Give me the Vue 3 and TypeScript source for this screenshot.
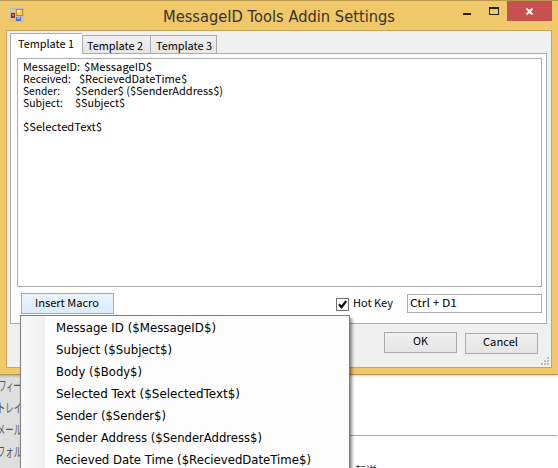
<script setup lang="ts">
import { h } from 'vue'

interface LabelProps { text: string; width: number; height?: number }

// Single-line label fitted to a fixed advance width
const Label = (props: LabelProps) => {
  const height = props.height ?? 12
  return h('svg', { class: 'label', width: props.width, height }, [
    h('text', {
      x: 0, y: height - 2, fill: 'currentColor',
      textLength: props.width, lengthAdjust: 'spacingAndGlyphs',
    }, props.text),
  ])
}
Label.props = ['text', 'width', 'height']

const lines = [
  { key: 'MessageID:', kw: 57, gap: 4, value: '$MessageID$', vw: 68 },
  { key: 'Received:', kw: 48, gap: 8, value: '$RecievedDateTime$', vw: 108 },
  { key: 'Sender:', kw: 37, gap: 15, value: '$Sender$ ($SenderAddress$)', vw: 148 },
  { key: 'Subject:', kw: 40, gap: 12, value: '$Subject$', vw: 50 },
  { key: '', kw: 0, gap: 0, value: '', vw: 0 },
  { key: '', kw: 0, gap: 0, value: '$SelectedText$', vw: 79 },
]
const macros = [
  { text: 'Message ID ($MessageID$)', width: 160 },
  { text: 'Subject ($Subject$)', width: 116 },
  { text: 'Body ($Body$)', width: 86 },
  { text: 'Selected Text ($SelectedText$)', width: 184 },
  { text: 'Sender ($Sender$)', width: 110 },
  { text: 'Sender Address ($SenderAddress$)', width: 206 },
  { text: 'Recieved Date Time ($RecievedDateTime$)', width: 255 },
]
const fields = [
  { text: 'フィー', width: 22 },
  { text: 'トレイ', width: 25 },
  { text: 'メール', width: 25 },
  { text: 'フォル', width: 25 },
]
</script>

<template>
  <div class="screen">
    <section class="window">
      <header class="titlebar">
        <svg class="appicon" width="14" height="14" shape-rendering="crispEdges">
          <rect width="14" height="14" fill="#b9bcc4" />
          <rect x="1" y="1" width="4" height="3" fill="#efc76a" />
          <rect x="1" y="10" width="4" height="3" fill="#efc76a" />
          <rect x="6" y="1" width="7" height="7" fill="#b98a1c" />
          <rect x="7" y="2" width="5" height="5" fill="#fbd04a" />
          <rect x="7" y="2" width="3" height="2" fill="#fff0a0" />
          <rect x="1" y="5" width="4" height="5" fill="#a51e1e" />
          <rect x="2" y="6" width="2" height="2" fill="#e06a60" />
          <rect x="6" y="9" width="5" height="4" fill="#3f78dc" />
          <rect x="7" y="9" width="3" height="2" fill="#86b4ff" />
          <rect x="12" y="9" width="1" height="4" fill="#efc76a" />
        </svg>
        <Label class="title" text="MessageID Tools Addin Settings" :width="232" :height="18" />
        <svg class="controls" width="95" height="20" shape-rendering="crispEdges">
          <rect x="0" y="12" width="8" height="2" fill="#222" />
          <path d="M26 6h10v8h-10zM27 8v5h8v-5z" fill="#222" fill-rule="evenodd" />
          <rect x="44" width="45" height="20" fill="#c75050" />
          <path d="M63.500 7.500l6 6M69.500 7.500l-6 6" stroke="#fff" stroke-width="1.800" shape-rendering="auto" />
        </svg>
      </header>

      <div class="client">
        <nav class="tabs">
          <div class="tab active"><Label text="Template 1" :width="56" /></div>
          <div class="tab"><Label text="Template 2" :width="56" /></div>
          <div class="tab last"><Label text="Template 3" :width="56" /></div>
        </nav>
        <div class="page">
          <div class="editor">
            <div v-for="(l, i) in lines" :key="i" class="line" :style="{ gap: l.gap + 'px' }">
              <Label v-if="l.key" :text="l.key" :width="l.kw" />
              <Label v-if="l.value" :text="l.value" :width="l.vw" />
            </div>
          </div>
          <div class="options">
            <button class="btn macro"><Label text="Insert Macro" :width="64" /></button>
            <svg class="check" width="13" height="13">
              <rect x=".5" y=".5" width="12" height="12" fill="#fff" stroke="#707070" />
              <path d="M3 6.300l2.500 2.900 4.700-6.200" fill="none" stroke="#111" stroke-width="2.200" />
            </svg>
            <Label class="hot" text="Hot Key" :width="40" />
            <div class="key"><Label text="Ctrl + D1" :width="47" /></div>
          </div>
        </div>
        <footer class="actions">
          <button class="btn ok"><Label text="OK" :width="15" /></button>
          <button class="btn cancel"><Label text="Cancel" :width="35" /></button>
          <svg class="grip" width="8" height="8" fill="#bdbdbd" shape-rendering="crispEdges">
            <path d="M6 0h2v2h-2zM3 3h2v2h-2zM6 3h2v2h-2zM0 6h2v2h-2zM3 6h2v2h-2zM6 6h2v2h-2z" />
          </svg>
        </footer>
      </div>
    </section>

    <section class="behind">
      <div class="fields">
        <div v-for="f in fields" :key="f.text" class="field"><Label :text="f.text" :width="f.width" :height="17" /></div>
      </div>
      <div class="pane"><div class="rule"></div><div class="forward">転送</div></div>
    </section>

    <div class="menu">
      <div v-for="m in macros" :key="m.text" class="item">
        <Label :text="m.text" :width="m.width" :height="14" />
      </div>
    </div>
  </div>
</template>

<style>
body { margin: 0; overflow: hidden; }
</style>

<style scoped>
* { box-sizing: border-box; }
.screen { position: relative; width: 558px; height: 468px; overflow: hidden; background: #fff; color: #000; font: 11px "Noto Sans CJK JP", sans-serif; }
.label { display: block; flex: none; overflow: visible; }
.window { width: 558px; height: 375px; background: #f0c869; border-top: 1px solid #b9974e; border-bottom: 1px solid #b9974e; box-shadow: 0 1px 2px #0003; position: relative; }
.titlebar { height: 29px; display: flex; align-items: flex-start; }
.appicon { margin: 7px 0 0 10px; flex: none; }
.title { margin: 5px 0 0 139px; font: 15px "DejaVu Sans", sans-serif; color: #38342a; }
.controls { margin-left: 68px; flex: none; }
.client { margin-left: 6px; width: 546px; height: 338px; border: 1px solid #c8a656; background: #f0f0f0; padding: 2px 4px 0 3px; }
.tabs { display: flex; align-items: flex-end; height: 20px; }
.tab { height: 18px; width: 68px; padding: 4px 0 0 4px; border: 1px solid #acacac; border-bottom: 0; border-right: 0; background: linear-gradient(#f0f0f0, #e6e6e6); }
.tab.active { width: 72px; height: 21px; margin-bottom: -1px; padding: 4px 0 0 7px; background: #fff; position: relative; }
.tab.last { width: 67px; padding-left: 5px; border-right: 1px solid #acacac; }
.page { height: 271px; width: 537px; border: 1px solid #acacac; background: #fff; padding: 4px 4px 0 6px; }
.editor { width: 525px; height: 229px; border: 1px solid #abadb3; padding: 2px 0 0 5px; }
.line { display: flex; height: 12px; }
.options { display: flex; align-items: flex-start; padding: 6px 0 0 4px; }
.btn { display: flex; justify-content: center; margin: 0; padding: 4px 0 0; height: 21px; border: 1px solid #acacac; background: linear-gradient(#f0f0f0, #e5e5e5); font: inherit; color: inherit; }
.macro { width: 93px; padding: 3px 2px 0 0; border-color: #7eb4ea; background: linear-gradient(#ebf4fc, #dcecfc); }
.check { margin: 5px 0 0 222px; flex: none; }
.hot { margin: 4px 0 0 4px; }
.key { width: 135px; height: 19px; margin: 1px 0 0 14px; border: 1px solid #abadb3; padding: 2px 0 0 2px; }
.actions { display: flex; align-items: flex-start; padding: 8px 0 0 374px; }
.ok { width: 73px; padding-top: 2px; flex: none; }
.cancel { width: 73px; margin: 1px 0 0 8px; padding: 2px 2px 0 0; flex: none; }
.grip { margin: 25px 0 0 3px; flex: none; }
.behind { display: flex; height: 93px; }
.fields { width: 21px; overflow: hidden; background: linear-gradient(#d2d2d2, #dedede 4px); color: #555; font-size: 13px; }
.field { height: 22px; margin-left: -3px; }
.field:first-child { margin-left: -1px; }
.pane { flex: 1; padding: 60px 1px 0 329px; }
.rule { height: 1px; background: #a8a8a8; }
.forward { margin: 26px 0 0 5px; font-size: 11px; line-height: 16px; color: #333; }
.menu { position: absolute; left: 20px; top: 315px; width: 330px; height: 180px; border: 1px solid #808080; background: linear-gradient(90deg, #fafafa, #f0f0f0 24px, #fdfdfd 24px); box-shadow: 2px 3px 3px #0007; padding: 3px 0 0 35px; font: 12px "DejaVu Sans", sans-serif; }
.item { height: 22px; padding-top: 1px; }
</style>
